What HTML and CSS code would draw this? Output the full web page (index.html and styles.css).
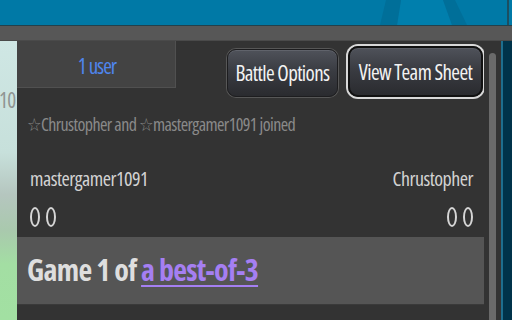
FILE: index.html
```html
<!DOCTYPE html>
<html>
<head>
<meta charset="utf-8">
<link rel="stylesheet" href="styles.css">
</head>
<body>
<div class="page">
  <div class="topbar">
    <svg class="topart" width="512" height="25" viewBox="0 0 512 25">
      <rect x="0" y="0" width="512" height="25" fill="#0079a6"/>
      <polygon points="397,25 401,0 443,0 452,25" fill="#007fad"/>
      <polygon points="380,25 386,0 401,0 397,25" fill="#006f99"/>
      <polygon points="443,0 455,0 467,25 452,25" fill="#006f99"/>
      <rect x="507" y="0" width="2" height="25" fill="#1c4e61"/>
    </svg>
  </div>
  <div class="graybar"></div>
  <div class="main">
    <div class="strip"><span class="strip-num">10</span></div>
    <div class="chat">
      <div class="head">
        <div class="users"><span class="users-text">1 user</span></div>
        <div class="btns">
          <button class="btn btn-options">Battle Options</button>
          <button class="btn btn-sheet">View Team Sheet</button>
        </div>
      </div>
      <div class="joined">☆Chrustopher and ☆mastergamer1091 joined</div>
      <div class="players">
        <div class="player">
          <div class="pname">mastergamer1091</div>
          <div class="wins"><span class="win"></span><span class="win"></span></div>
        </div>
        <div class="player right">
          <div class="pname">Chrustopher</div>
          <div class="wins"><span class="win"></span><span class="win"></span></div>
        </div>
      </div>
      <div class="game">Game 1 of <a class="bo3" href="#">a best-of-3</a></div>
    </div>
    <div class="gutter"><div class="thumb"></div></div>
    <div class="edge"></div>
  </div>
</div>
</body>
</html>
```
FILE: styles.css
```css
html, body {
  margin: 0;
  padding: 0;
  background: #333;
}
.page {
  width: 512px;
  height: 320px;
  overflow: hidden;
  display: flex;
  flex-direction: column;
  font-family: "Open Sans", "DejaVu Sans", sans-serif;
  font-stretch: 75%;
}
.topbar {
  height: 25px;
  border-bottom: 1px solid #23414c;
  display: flex;
}
.topart { display: block; }
.graybar {
  height: 14px;
  background: #575757;
  border-bottom: 1px solid #4a4a4a;
}
.main {
  flex: 1;
  display: flex;
  min-height: 0;
}
.strip {
  width: 17px;
  flex: none;
  background: linear-gradient(to bottom, #cfe7e4 0%, #c7e0db 40%, #b5c6bf 55%, #a9c9ad 68%, #a3dea3 80%, #a2e0a2 100%);
  overflow: hidden;
  display: flex;
  flex-direction: column;
}
.strip-num {
  margin-top: 47px;
  margin-left: -1px;
  font-size: 21px;
  line-height: 24px;
  color: #8f9593;
  letter-spacing: -0.8px;
}
.chat {
  width: 467px;
  flex: none;
  display: flex;
  flex-direction: column;
  background: #333;
}
.head {
  height: 57px;
  display: flex;
  align-items: flex-start;
}
.users {
  width: 158px;
  height: 46px;
  background: #434343;
  border-right: 1px solid #505050;
  border-bottom: 1px solid #505050;
  display: flex;
  align-items: center;
  justify-content: center;
}
.users-text {
  color: #4f86ee;
  font-size: 21px;
  letter-spacing: -1px;
  margin-left: 2px;
  margin-top: 3px;
}
.btns {
  display: flex;
  align-items: flex-start;
  gap: 10px;
  margin-left: 51px;
}
.btn {
  font-family: inherit;
  font-stretch: 75%;
  font-size: 21px;
  letter-spacing: -0.6px;
  color: #f2f2f2;
  padding: 0;
  box-sizing: border-box;
  border-radius: 9px;
  background: linear-gradient(to bottom, #4f525a 0%, #3a3c42 45%, #2a2b2f 100%);
  display: flex;
  align-items: center;
  justify-content: center;
}
.btn-options {
  margin-top: 8px;
  width: 111px;
  height: 48px;
  border: 1px solid #1d1d1f;
  box-shadow: 0 0 0 1px #575757, inset 0 1px 0 #60636b;
}
.btn-sheet {
  margin-top: 5px;
  width: 135px;
  height: 51px;
  border: 2px solid #111;
  box-shadow: 0 0 0 2px #d8d8d8, inset 0 1px 0 #5a5d65;
  border-radius: 10px;
}
.joined {
  margin-top: 16px;
  margin-left: 10px;
  font-size: 18px;
  line-height: 20px;
  color: #8a8a8a;
  letter-spacing: -0.6px;
}
.players {
  margin-top: 34px;
  display: flex;
  justify-content: space-between;
  padding: 0 11px 0 13px;
}
.player {
  display: flex;
  flex-direction: column;
}
.player.right {
  align-items: flex-end;
}
.pname {
  font-size: 20px;
  line-height: 22px;
  color: #d2d2d2;
  letter-spacing: -0.5px;
}
.wins {
  margin-top: 17px;
  display: flex;
  gap: 6px;
}
.win {
  width: 6px;
  height: 16px;
  border: 2px solid #d6d6d6;
  border-radius: 50%;
}
.game {
  margin-top: 10px;
  height: 68px;
  background: #555;
  border-bottom: 1px solid #3a3a3a;
  box-sizing: border-box;
  padding-left: 10px;
  font-size: 30px;
  font-weight: 700;
  line-height: 66px;
  color: #dedede;
  letter-spacing: -0.7px;
}
.bo3 {
  color: #a57ff2;
  text-decoration: underline;
  text-decoration-thickness: 2px;
  text-underline-offset: 4px;
}
.gutter {
  width: 17px;
  flex: none;
  background: #333;
  display: flex;
}
.thumb {
  margin-top: 12px;
  margin-left: 5px;
  width: 7px;
  flex: none;
  background: #6a6a6a;
  border-radius: 4px 4px 0 0;
}
.edge {
  flex: 1;
  background: #00334a;
  border-left: 2px solid #1e6e8e;
}
```
